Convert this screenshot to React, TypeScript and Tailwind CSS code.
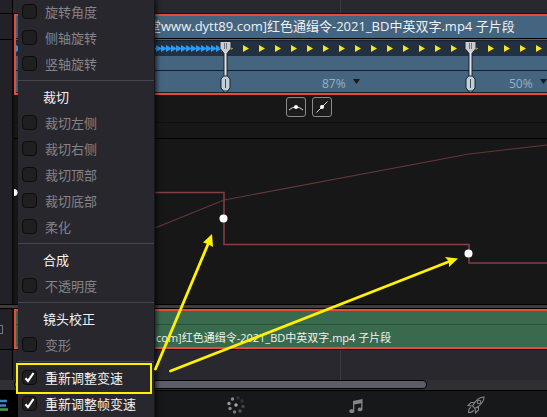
import React from "react";

type Item = { label: string; checked?: boolean; disabled?: boolean };
type Group = { title?: string; items: Item[] };

const groups: Group[] = [
  {
    items: [
      { label: "旋转角度", disabled: true },
      { label: "侧轴旋转", disabled: true },
      { label: "竖轴旋转", disabled: true },
    ],
  },
  {
    title: "裁切",
    items: [
      { label: "裁切左侧", disabled: true },
      { label: "裁切右侧", disabled: true },
      { label: "裁切顶部", disabled: true },
      { label: "裁切底部", disabled: true },
      { label: "柔化", disabled: true },
    ],
  },
  { title: "合成", items: [{ label: "不透明度", disabled: true }] },
  { title: "镜头校正", items: [{ label: "变形", disabled: true }] },
  {
    items: [
      { label: "重新调整变速", checked: true },
      { label: "重新调整帧变速", checked: true },
    ],
  },
];

function MenuRow({ label, checked, disabled }: Item) {
  return (
    <label
      className={`flex h-[26px] items-start gap-2 pt-[5px] pl-1 ${disabled ? "text-[#858488]" : "text-[#f2f2f2]"}`}
    >
      <span className="relative flex size-[15px]">
        <input
          type="checkbox"
          defaultChecked={checked}
          disabled={disabled}
          className="peer size-[15px] appearance-none rounded-sm border border-[#0c0c0d] bg-[#1f1f20]"
        />
        <svg
          viewBox="0 0 15 15"
          className="pointer-events-none absolute inset-0 hidden size-[15px] peer-checked:block"
          fill="none"
          stroke="#fff"
          strokeWidth="2.2"
        >
          <path d="M3.5 8.2 6 11l5.5-8" />
        </svg>
      </span>
      {label}
    </label>
  );
}

function CurveMenu() {
  return (
    <div className="absolute -top-px left-[18px] w-[137px] border-r border-[#17171b] bg-[#28272e] pb-4 text-[13px] leading-4 shadow-[2px_0_4px_rgba(0,0,0,0.6)]">
      {groups.map((group, i) => (
        <div key={i}>
          {i > 0 && (
            <div className="flex h-[7px] items-center">
              <hr className="w-full border-[#46464c]" />
            </div>
          )}
          {group.title && (
            <h2 className="h-[26px] pt-[5px] pl-[25px] text-[#f2f2f2]">{group.title}</h2>
          )}
          {group.items.map((item) => (
            <MenuRow key={item.label} {...item} />
          ))}
        </div>
      ))}
    </div>
  );
}

function SpeedArrows() {
  const slow = Array.from({ length: 42 }, (_, i) => i * 5);
  const first = Array.from({ length: 16 }, (_, i) => 211 + i * 16);
  const second = Array.from({ length: 60 }, (_, i) => 456 + i * 16);
  return (
    <svg className="block h-[15px] w-full bg-[#22303f]" aria-hidden="true">
      {slow.map((x) => (
        <path key={x} d={`M${x} 4l6 3.500-6 3.500z`} fill="#2a9bf8" />
      ))}
      {[...first, ...second].map((x) => (
        <path key={x} d={`M${x} 4l6 3.500-6 3.500z`} fill="#f4e81c" />
      ))}
    </svg>
  );
}

function SpeedPoint() {
  return (
    <svg viewBox="0 0 13 53" className="block h-[53px] w-[13px]" aria-hidden="true">
      <path d="M6.500 12v40" stroke="#18222c" strokeWidth="4" />
      <path d="M1 1.500h11v7l-4 5H5l-4-5z" fill="#c9cdd2" stroke="#1b242d" />
      <path d="M5.500 3v6M7.500 3v6" stroke="#6e757c" />
      <path d="M6.500 12v40" stroke="#e4e8eb" strokeWidth="2" />
      <path d="M4.500 36h4l2.500 3v9l-2.500 3h-4L2 48v-9z" fill="#c3cfd8" stroke="#18222c" />
      <path d="M6.500 39v9" stroke="#3e4a55" />
    </svg>
  );
}

function SpeedButton({ value }: { value: string }) {
  return (
    <button className="flex items-center gap-[7px] text-xs leading-4 font-medium text-[#9ab0c1]">
      {value}
      <svg viewBox="0 0 7 5" className="-mt-1 h-[5px] w-[7px]" fill="#17191c" aria-hidden="true">
        <path d="M0 0h7L3.500 5z" />
      </svg>
    </button>
  );
}

function VideoClip() {
  return (
    <div className="relative flex-1 overflow-hidden border-y-2 border-l-2 border-[#ea4a3c] bg-[#44647f]">
      <div className="h-[23px] truncate border-b border-black pl-[132px] text-[13px] leading-5 text-[#eef2f5]">
        堂www.dytt89.com]红色通缉令-2021_BD中英双字.mp4 子片段
      </div>
      <div className="h-0.5 border-b border-[#17222c]" />
      <SpeedArrows />
      <div className="h-[15px] border-b border-[#17202a]" />
      <div className="flex h-[22px] items-center border-b border-[#17202a] pt-1">
        <div className="w-[209px]" />
        <div className="flex w-[245px] pl-[97px]">
          <SpeedButton value="87%" />
        </div>
        <div className="flex flex-1 pl-[39px]">
          <SpeedButton value="50%" />
        </div>
      </div>
      <div className="absolute top-[24px] left-[203px]">
        <SpeedPoint />
      </div>
      <div className="absolute top-[24px] left-[448px]">
        <SpeedPoint />
      </div>
    </div>
  );
}

function CurveEditor() {
  return (
    <div className="flex-1 bg-[#171717]">
      <div className="flex h-7 gap-1.5 border-b border-[#101010] pt-0.5 pl-[272px]">
        <button
          aria-label="平滑"
          className="flex size-5 items-center justify-center rounded-[3px] border border-[#8a8a8a] bg-[#1c1c1c]"
        >
          <svg viewBox="0 0 14 8" className="h-2 w-3.5" fill="none" stroke="#ddd">
            <path d="M0 7q3-3 7-3t7 3" />
            <circle cx="7" cy="4" r="2" fill="#fff" stroke="none" />
          </svg>
        </button>
        <button
          aria-label="线性"
          className="flex size-5 items-center justify-center rounded-[3px] border border-[#8a8a8a] bg-[#1c1c1c]"
        >
          <svg viewBox="0 0 12 12" className="size-3" fill="none" stroke="#ddd">
            <path d="M0.500 11.500 11.500 0.500" />
            <circle cx="6" cy="6" r="2" fill="#fff" stroke="none" />
          </svg>
        </button>
      </div>
      <div className="h-4 border-b border-black" />
      <svg className="block h-[165px] w-full" fill="none" aria-hidden="true">
        <path d="M141 89 210 61 455 15 533 6 1333-80" stroke="#63373b" strokeWidth="1.2" />
        <path d="M0 53.500h210v52h245v18.500h2000" stroke="#864045" strokeWidth="1.500" />
        <g fill="#fff">
          <circle cx="0" cy="53.500" r="3.500" />
          <circle cx="209.500" cy="79.500" r="4" />
          <circle cx="454.500" cy="114.500" r="4" />
        </g>
      </svg>
    </div>
  );
}

function AudioClip() {
  return (
    <div className="flex-1 overflow-hidden border-y-2 border-l-2 border-[#ea4a3c] bg-[#3a6a4e]">
      <div className="h-[14px] border-b border-[#28503a]" />
      <div className="h-[22px] truncate pt-[5px] pl-[140px] text-[11px] leading-4 text-[#eef4f0]">
        com]红色通缉令-2021_BD中英双字.mp4 子片段
      </div>
    </div>
  );
}

function PageBar() {
  return (
    <nav className="flex flex-1 overflow-hidden border-t border-black bg-[#17181a] text-[#858585]">
      <button
        aria-label="剪辑"
        className="-ml-16 flex h-[27px] w-[120px] shrink-0 items-center justify-center bg-black"
      >
        <svg viewBox="0 0 24 16" className="h-4 w-6" strokeWidth="2.500">
          <path d="M4 4h19M2 8.500h20" stroke="#3d86c6" />
          <path d="M3 12.500h21" stroke="#4d9a58" />
        </svg>
      </button>
      <div className="w-[120px] shrink-0" />
      <button aria-label="调色" className="flex h-7 w-[120px] shrink-0 items-center justify-center">
        <svg viewBox="0 0 18 18" className="size-[18px]" fill="currentColor">
          <circle cx="9" cy="9" r="1.700" fill="#aaa" />
          <circle cx="5.500" cy="3" r="1.700" fill="#888" />
          <circle cx="11" cy="2" r="1.700" fill="#333" />
          <circle cx="15" cy="5" r="1.700" fill="#333" />
          <circle cx="16" cy="10.500" r="1.700" fill="#444" />
          <circle cx="13" cy="15" r="1.700" fill="#555" />
          <circle cx="7.500" cy="16" r="1.700" fill="#777" />
          <circle cx="3" cy="12.500" r="1.700" fill="#888" />
          <circle cx="2" cy="7.500" r="1.700" fill="#999" />
        </svg>
      </button>
      <button aria-label="音频" className="flex h-[30px] w-[120px] shrink-0 items-center justify-center">
        <svg viewBox="0 0 14 14" className="size-3.5" fill="currentColor">
          <path d="M4 2l9.500-2v10.500a2.400 1.800 0 1 1-1.300-1.700V4.200L5.300 5.600v6.600A2.500 1.900 0 1 1 4 10.500z" />
        </svg>
      </button>
      <button aria-label="交付" className="flex h-7 w-[120px] shrink-0 items-center justify-center">
        <svg
          viewBox="0 0 18 18"
          className="size-[18px]"
          fill="none"
          stroke="currentColor"
          strokeWidth="1.100"
        >
          <path d="M17 1c-5 0-8 2.500-11.500 9l2.500 2.500C14.500 9 17 6 17 1zM7.500 6.500H4L1 9.500l4.500.5M11.500 10.500V14l-3 3-.5-4.500" />
          <circle cx="12" cy="6" r="1.800" />
          <path d="M4 11.500c-2 .5-2.500 2.500-2.500 5 2.500 0 4.500-.5 5-2.500" />
        </svg>
      </button>
    </nav>
  );
}

function Annotations() {
  return (
    <svg
      className="pointer-events-none absolute inset-0 size-full"
      fill="none"
      stroke="#fff200"
      strokeWidth="2.800"
      strokeLinecap="round"
      aria-hidden="true"
    >
      <rect x="17" y="364" width="134" height="29" strokeWidth="2" />
      <path d="M155.500 369 208.500 243M170.500 371 448 262" />
      <g fill="#fff200" stroke="none">
        <path d="M212 234l-9 8.500 5 1.500 5 3z" />
        <path d="M458 258.500l-13-1.500 4 4.500v5.500z" />
      </g>
    </svg>
  );
}

export default function App() {
  return (
    <main className="relative flex min-h-screen flex-col overflow-hidden bg-[#28282e] font-['Open_Sans','Noto_Sans_CJK_SC',sans-serif]">
      <div className="flex h-[14px]">
        <div className="w-[13px] border-r border-b border-black bg-[#222128]" />
        <div className="flex flex-1 border-b border-[#141417]">
          <div className="w-[328px] border-r border-[#3a3a40]" />
        </div>
      </div>
      <div className="flex">
        <div className="w-[14px] border-r-2 border-[#0c0c0d] bg-[#222128]">
          <div className="h-[26px] border-b border-black" />
        </div>
        <VideoClip />
      </div>
      <div className="flex">
        <div className="w-[14px] border-r-2 border-[#0c0c0d] bg-[#222128]" />
        <CurveEditor />
      </div>
      <div className="h-[5px] border-y border-black bg-[#3e3c3e]" />
      <div className="flex">
        <div className="flex w-[14px] items-center border-r-2 border-[#0c0c0d] bg-[#222128]">
          <span className="h-[9px] w-[3px] border border-l-0 border-[#77777b]" />
        </div>
        <AudioClip />
      </div>
      <div className="flex h-[31px] border-t border-black">
        <div className="w-[13px] border-r border-black bg-[#222128]" />
        <div className="w-[328px] border-r border-[#3a3a40]" />
      </div>
      <div className="flex h-[10px] bg-[#303034]">
        <div className="ml-[14px] h-[9px] w-[413px] rounded-[4px] border border-black bg-[#5b5e66]" />
      </div>
      <PageBar />
      <CurveMenu />
      <Annotations />
    </main>
  );
}
